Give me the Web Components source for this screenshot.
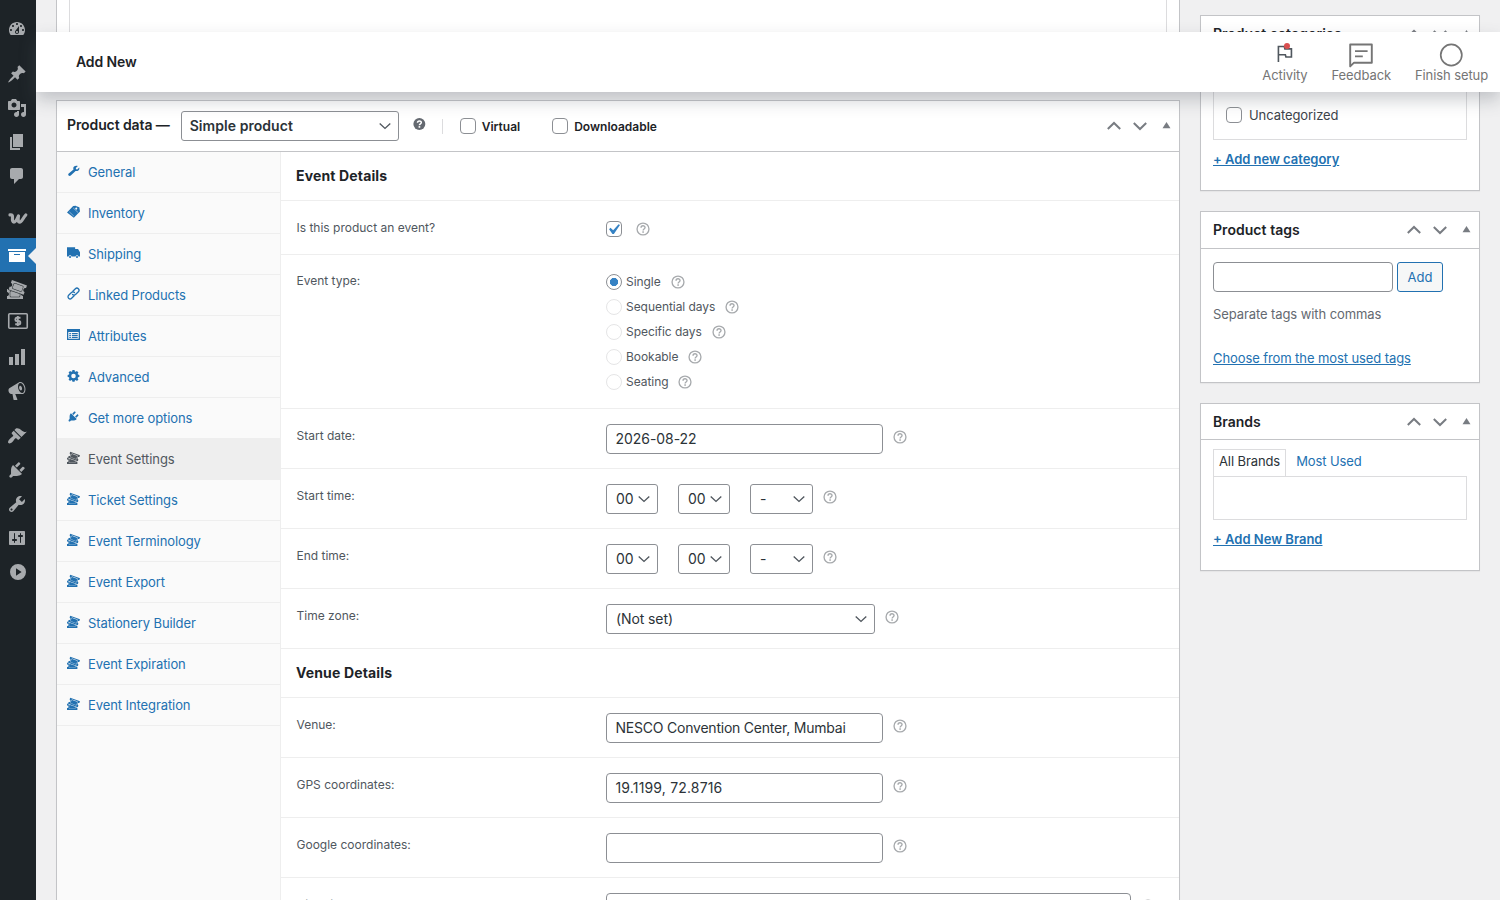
<!DOCTYPE html>
<html lang="en">
<head>
<meta charset="utf-8">
<title>Add New</title>
<style>
  body {
    margin: 0;
    height: 900px;
    overflow: hidden;
    position: relative;
    display: flex;
    background: #f0f0f1;
    color: #3c434a;
    font-family: Inter, "Liberation Sans", sans-serif;
    font-size: 13px;
  }
  #content {
    flex: 1;
    display: grid;
    grid-template-columns: 1124px 280px;
    column-gap: 20px;
    padding-left: 20px;
    align-items: start;
  }
  #side {
    padding-top: 15px;
    display: flex;
    flex-direction: column;
    gap: 20px;
  }
  .divider { width: 1px; height: 15px; background: #dcdcde; margin: 0 17px 0 16px; }
  .typeSelect { margin-left: 11px; }
</style>
</head>
<body>
<admin-menu></admin-menu>
<div id="content">
  <div>
    <editor-end></editor-end>
    <post-box class="productData" style="--head: 51px; --padLeft: 10px; height: 800px; border-bottom: 0">
      <span slot="title" style="letter-spacing: -0.1px; padding-bottom: 3px">Product data —</span>
      <wp-select slot="extra" class="typeSelect" style="width: 218px; --weight: 600; --pad: 8px; letter-spacing: 0.05px">Simple product</wp-select>
      <wp-icon slot="extra" name="helpFull" size="14" style="color: #646970; margin: -4px 0 0 13px"></wp-icon>
      <div slot="extra" class="divider"></div>
      <wp-check slot="extra" bold>Virtual</wp-check>
      <wp-check slot="extra" bold style="margin-left: 32px">Downloadable</wp-check>
      <product-panel></product-panel>
    </post-box>
  </div>
  <div id="side">
    <post-box style="height: 176px">
      <span slot="title">Product categories</span>
      <category-list></category-list>
    </post-box>
    <post-box style="height: 172px; --head: 37px">
      <span slot="title" style="padding-bottom: 2px; letter-spacing: 0.05px">Product tags</span>
      <tag-form></tag-form>
    </post-box>
    <post-box style="height: 168px">
      <span slot="title">Brands</span>
      <brand-list></brand-list>
    </post-box>
  </div>
</div>
<page-header>
  Add New
  <header-action slot="actions" icon="flag" dot>Activity</header-action>
  <header-action slot="actions" icon="feedback">Feedback</header-action>
  <header-action slot="actions" icon="ring">Finish setup</header-action>
</page-header>

<script>
const icons = {
  dashboard: '<path d="M3.76 16h12.48c1.1-1.37 1.76-3.11 1.76-5 0-4.42-3.58-8-8-8s-8 3.58-8 8c0 1.89.66 3.63 1.76 5zM10 4c.55 0 1 .45 1 1s-.45 1-1 1-1-.45-1-1 .45-1 1-1zM6 6c.55 0 1 .45 1 1s-.45 1-1 1-1-.45-1-1 .45-1 1-1zm8 0c.55 0 1 .45 1 1s-.45 1-1 1-1-.45-1-1 .45-1 1-1zm-5.37 5.55L12 7v6c0 1.1-.9 2-2 2s-2-.9-2-2c0-.57.24-1.08.63-1.45zM4 10c.55 0 1 .45 1 1s-.45 1-1 1-1-.45-1-1 .45-1 1-1zm12 0c.55 0 1 .45 1 1s-.45 1-1 1-1-.45-1-1 .45-1 1-1zm-5 3c0-.55-.45-1-1-1s-1 .45-1 1 .45 1 1 1 1-.45 1-1z"/>',
  pin: '<path d="M10.44 3.02l1.82-1.82 6.36 6.35-1.83 1.82c-1.05-.68-2.48-.57-3.41.36l-.75.75c-.92.93-1.04 2.35-.35 3.41l-1.83 1.82-2.41-2.41-2.8 2.79c-.42.42-3.38 2.71-3.8 2.29s1.86-3.39 2.28-3.81l2.79-2.79L4.1 9.36l1.83-1.82c1.05.69 2.48.57 3.4-.36l.75-.75c.93-.92 1.05-2.35.36-3.41z"/>',
  media: '<path d="M13 11V4c0-.55-.45-1-1-1h-1.67L9 1H5L3.67 3H2c-.55 0-1 .45-1 1v7c0 .55.45 1 1 1h10c.55 0 1-.45 1-1zM7 4.5c1.38 0 2.5 1.12 2.5 2.5S8.38 9.5 7 9.5 4.5 8.38 4.5 7 5.62 4.5 7 4.5zM14 6h5v10.5c0 1.38-1.12 2.5-2.5 2.5S14 17.88 14 16.5s1.12-2.5 2.5-2.5c.17 0 .34.02.5.05V9h-3V6zm-4 8.05V13h2v3.5c0 1.38-1.12 2.5-2.5 2.5S7 17.88 7 16.5 8.12 14 9.5 14c.17 0 .34.02.5.05z"/>',
  page: '<path d="M6 15V2h10v13H6zm-1 1h8v2H3V5h2v11z"/>',
  comments: '<path d="M5 2h9c1.1 0 2 .9 2 2v7c0 1.1-.9 2-2 2h-2l-5 5v-5H5c-1.1 0-2-.9-2-2V4c0-1.1.9-2 2-2z"/>',
  woo: '<path d="M2 6.1C4.400 5.700 4.600 7 4.500 9C4.300 11.500 4.600 13.400 5.900 13.400C7.600 13.400 9 10.500 10.500 7.100C9.800 10.500 10 13.400 11.700 13.400C13.700 13.400 14.800 9.500 17.800 6.200" fill="none" stroke="currentColor" stroke-width="3.200" stroke-linejoin="round" stroke-linecap="round" transform="translate(1 -2.2)"/>',
  archive: '<path d="M19 4v2H1V4h18zM2 7h16v10H2V7zm11 3V9H7v1h6z"/>',
  tickets: '<path d="M20 6.38L18.99 9.2v-.01c-.52-.19-1.03-.16-1.53.08s-.85.62-1.04 1.14-.16 1.03.07 1.53c.24.5.62.84 1.15 1.03v.01l-1.01 2.82-15.06-5.38.99-2.79c.52.19 1.03.16 1.53-.08.5-.23.84-.61 1.03-1.13s.16-1.03-.08-1.53c-.23-.49-.61-.83-1.13-1.02L4.93 1zm-4.97 5.69l1.37-3.76c.12-.31.1-.65-.04-.95s-.39-.53-.7-.65L8.14 3.98c-.64-.23-1.37.12-1.6.74L5.17 8.48c-.24.65.1 1.37.74 1.6l7.52 2.74c.14.05.28.08.43.08.52 0 1-.33 1.17-.83zM7.97 4.45l7.51 2.73c.19.07.34.21.43.39.08.18.09.38.02.57l-1.37 3.76c-.13.38-.58.59-.96.45L6.09 9.61c-.39-.14-.59-.57-.45-.96l1.37-3.76c.1-.29.39-.49.7-.49.09 0 .17.02.26.05zm6.82 12.14c.35.27.75.41 1.2.41H16v3H0v-2.96c.55 0 1.03-.2 1.41-.59.39-.38.59-.86.59-1.41s-.2-1.02-.59-1.41-.86-.59-1.41-.59V10h1.05l-.28.8 2.87 1.02c-.51.16-.89.62-.89 1.18v4c0 .69.56 1.25 1.25 1.25h8c.69 0 1.25-.56 1.25-1.25v-1.75l.83.3c.12.43.36.78.71 1.04zM3.25 17v-4c0-.41.34-.75.75-.75h.83l7.92 2.83V17c0 .41-.34.75-.75.75H4c-.41 0-.75-.34-.75-.75z"/>',
  payments: '<g transform="translate(.5 -.5)"><rect x="1.250" y="1.250" width="18.500" height="14.500" rx="1" fill="none" stroke="currentColor" stroke-width="1.600"/><path d="M13 5.300H9.200C7.400 5.300 7.400 8.500 9.200 8.500H11.300C13.300 8.500 13.300 11.800 11.300 11.800H7.700M10.300 3.500V13.600" fill="none" stroke="currentColor" stroke-width="1.900"/></g>',
  chart: '<path d="M18 18V2h-4v16h4zm-6 0V7H8v11h4zm-6 0v-8H2v8h4z"/>',
  megaphone: '<path d="M18.15 5.94c.46 1.62.38 3.22-.02 4.48-.42 1.28-1.26 2.18-2.3 2.48-.16.06-.26.06-.4.06-.06.02-.12.02-.18.02-.06.02-.14.02-.22.02h-6.8l2.22 5.5c.02.14-.06.26-.14.34-.08.1-.24.16-.34.16H6.95c-.1 0-.26-.06-.34-.16-.08-.08-.16-.2-.14-.34l-1-5.5H4.25l-.02-.02c-.5.06-1.08-.18-1.54-.62s-.88-1.08-1.06-1.88c-.24-.8-.2-1.56-.02-2.2.18-.62.58-1.08 1.06-1.3l.02-.02 9-5.4c.1-.06.18-.1.24-.16.06-.04.14-.08.24-.12.16-.08.28-.12.5-.18 1.04-.3 2.24.1 3.22.98s1.84 2.24 2.26 3.86zm-2.58 5.98h-.02c.4-.1.74-.34 1.04-.7.58-.7.86-1.76.86-3.04 0-.64-.1-1.3-.28-1.98-.34-1.36-1.02-2.5-1.78-3.24s-1.68-1.1-2.46-.88c-.82.22-1.4.96-1.7 2-.32 1.04-.28 2.36.06 3.72.38 1.36 1 2.5 1.8 3.24.78.74 1.62 1.1 2.48.88zm-2.54-7.08c.22-.04.42-.02.62.04.38.16.76.48 1.02 1s.42 1.2.42 1.78c0 .3-.04.56-.12.8-.18.48-.44.84-.86.94-.34.1-.8-.06-1.14-.4s-.64-.86-.78-1.5c-.18-.62-.12-1.24.02-1.72s.48-.84.82-.94z"/>',
  brush: '<path d="M14.48 11.06L7.41 3.99l1.5-1.5c.5-.56 2.3-.47 3.51.32 1.21.8 1.43 1.28 2.91 2.1 1.18.64 2.45 1.26 4.45.85zm-.71.71L6.7 4.7 4.93 6.47c-.39.39-.39 1.02 0 1.41l1.06 1.06c.39.39.39 1.03 0 1.42-.6.6-1.43 1.11-2.21 1.69-.35.26-.7.53-1.01.84C1.43 14.23.4 16.08 1.4 17.07c.99 1 2.84-.03 4.18-1.36.31-.31.58-.66.85-1.02.57-.78 1.08-1.61 1.69-2.21.39-.39 1.02-.39 1.41 0l1.06 1.06c.39.39 1.02.39 1.41 0z"/>',
  plug: '<path d="M13.11 4.36L9.87 7.6 8 5.73l3.24-3.24c.35-.34 1.05-.2 1.56.32.52.51.66 1.21.31 1.55zm-8 1.77l.91-1.12 9.01 9.01-1.19.84c-.71.71-2.63 1.16-3.82 1.16H6.14L4.9 17.26c-.59.59-1.54.59-2.12 0-.59-.58-.59-1.53 0-2.12l1.24-1.24v-3.88c0-1.13.4-3.19 1.09-3.89zm7.26 3.97l3.24-3.24c.34-.35 1.04-.21 1.55.31.52.51.66 1.21.31 1.55l-3.24 3.25z"/>',
  tools: '<path d="M16.68 9.77c-1.34 1.34-3.3 1.67-4.95.99l-5.41 6.52c-.99.99-2.59.99-3.58 0s-.99-2.59 0-3.57l6.52-5.42c-.68-1.65-.35-3.61.99-4.95 1.28-1.28 3.12-1.62 4.72-1.06l-2.89 2.89 2.82 2.82 2.86-2.87c.53 1.58.18 3.39-1.08 4.65zM3.81 16.21c.4.39 1.04.39 1.43 0 .4-.4.4-1.04 0-1.43-.39-.4-1.03-.4-1.43 0-.39.39-.39 1.03 0 1.43z"/>',
  settings: '<path d="M18 16V4c0-.55-.45-1-1-1H3c-.55 0-1 .45-1 1v12c0 .55.45 1 1 1h14c.55 0 1-.45 1-1zM8 11h1c.55 0 1 .45 1 1s-.45 1-1 1H8v1.5c0 .28-.22.5-.5.5s-.5-.22-.5-.5V13H6c-.55 0-1-.45-1-1s.45-1 1-1h1V5.5c0-.28.22-.5.5-.5s.5.22.5.5V11zm5-2h-1c-.55 0-1-.45-1-1s.45-1 1-1h1V5.500c0-.28.22-.5.5-.5s.5.22.5.5V7h1c.55 0 1 .45 1 1s-.45 1-1 1h-1v5.500c0 .28-.22.5-.5.5s-.5-.22-.5-.5V9z"/>',
  play: '<path fill-rule="evenodd" d="M11 2a8 8 0 1 0 0 16 8 8 0 0 0 0-16zM9 6.200L14.600 10 9 13.800z"/>',
  wrench: '<path d="M16.700 3.200L13.500 6.300l.5 1.700 1.700.5L18.800 5.300c.6 2-.1 3.800-1.400 4.800-1.300.9-2.800 1.100-4.200.5L5.800 17.800c-1 1-2.400 1-3.300 0-.9-1-.8-2.400.1-3.300L10 8.300c-.7-1.600-.3-3.300.9-4.400 1.500-1.400 3.800-1.600 5.800-.7z"/>',
  tag: '<path fill-rule="evenodd" d="M0 11.500L9.500 1.500 13.500 1 14.500 2 19 3.500 20 10 10.500 19.500zM14.200 3.800a1.500 1.500 0 1 0 .1 0z"/><path d="M3.500 10.500L10.500 17M9.500 4.500L17 11.500" stroke="#fafafa" stroke-width=".7"/>',
  truck: '<path d="M0 2h12.500v2.500h4.500l3 5V16h-2.300a2.400 2.400 0 0 0-4.600 0H7a2.400 2.400 0 0 0-4.600 0H0z"/><circle cx="4.700" cy="17" r="1.600"/><circle cx="15.400" cy="17" r="1.600"/>',
  link: '<g fill="none" stroke="currentColor" stroke-width="2" stroke-linecap="round"><path d="M9 6.600l3.900-4a3.200 3.200 0 0 1 4.600 4.600l-4.400 4.400a3.200 3.200 0 0 1-4.600 0"/><path d="M11 13.400l-3.900 4a3.200 3.200 0 0 1-4.600-4.600l4.400-4.400a3.200 3.200 0 0 1 4.600 0"/></g>',
  list: '<path fill-rule="evenodd" d="M0 1.500h20v17H0zM2 6v10.500h16V6zM3.500 7.500h2.500v2H3.500zm4 0h9v2h-9zM3.500 10.700h2.500v1.600H3.500zm4 0h9v1.600h-9zM3.500 13.500h2.500v2H3.500zm4 0h9v2h-9z"/>',
  gear: '<path fill-rule="evenodd" d="M8.400 1.500h3.200l.5 2.200 1.300.6 1.900-1.200 2.300 2.300-1.200 1.900.5 1.300 2.100.5v3.200l-2.100.5-.5 1.300 1.200 1.900-2.300 2.300-1.900-1.200-1.300.6-.5 2.100H8.400l-.5-2.100-1.300-.6-1.900 1.200L2.400 16l1.200-1.900-.5-1.300-2.100-.5V9.100l2.100-.5.5-1.300L2.400 5.400l2.300-2.300 1.900 1.200 1.300-.6zM10 7.200a3.500 3.500 0 1 0 0 7 3.500 3.500 0 0 0 0-7z"/>',
  help: '<circle cx="10" cy="10" r="8.500" fill="none" stroke="currentColor" stroke-width="1.900"/><path d="M7.200 8.200c0-3.700 5.700-3.500 5.700-.3 0 2.200-2.700 2.100-2.700 4.200" fill="none" stroke="currentColor" stroke-width="2"/><rect x="9" y="13.300" width="2.300" height="2.100"/>',
  helpFull: '<circle cx="10.500" cy="10" r="8.500"/><path d="M7.900 8.200c0-3.500 5.400-3.300 5.400-.4 0 2.200-2.700 2-2.700 4.100" fill="none" stroke="#fff" stroke-width="2.200"/><rect x="9.400" y="13" width="2.400" height="2.300" fill="#fff"/>',
  down: '<path d="M3.400 6.800l6.600 6.200 6.600-6.200" fill="none" stroke="currentColor" stroke-width="1.700"/>',
  check: '<path d="M14.83 4.89l1.34.94-5.81 8.38H9.020L5.780 9.670l1.340-1.250 2.570 2.400z"/>',
  orderUp: '<path d="M3.800 13l6.200-6 6.200 6" fill="none" stroke="currentColor" stroke-width="2"/>',
  orderDown: '<path d="M3.800 7l6.200 6 6.200-6" fill="none" stroke="currentColor" stroke-width="2"/>',
  toggle: '<path d="M6.500 12.200L10.500 6l4 6.200z"/>',
  flag: '<path d="M3.600 19V2.700h6.200l.6 2.400h6.900v8.600h-5.800l-.6-2.400H3.600" fill="none" stroke="currentColor" stroke-width="1.700"/>',
  feedback: '<path d="M1 19.500V1.200h18v15.200H4.200z" fill="none" stroke="currentColor" stroke-width="1.600" stroke-linejoin="round"/><path d="M5 6.800h10.500M5 11.200h6.500" stroke="currentColor" stroke-width="1.500"/>',
  ring: '<circle cx="9.400" cy="10" r="8.800" fill="none" stroke="currentColor" stroke-width="1.400"/>'
}

/**
 * Attaches an open shadow root and fills it with the given markup.
 */
function render (element, markup) {
  const template = document.createElement('template')
  template.innerHTML = markup
  element.attachShadow({ mode: 'open' }).appendChild(template.content.cloneNode(true))
}

customElements.define('wp-icon',
  class extends HTMLElement {
    connectedCallback () {
      if (this.shadowRoot) return
      const size = this.getAttribute('size') || 20
      render(this, `
        <style>
          :host { display: block; flex: none; width: ${size}px; height: ${size}px; }
          svg { display: block; fill: currentColor; overflow: visible; }
        </style>
        <svg width="${size}" height="${size}" viewBox="0 0 20 20">${icons[this.getAttribute('name')]}</svg>
      `)
    }
  }
)

customElements.define('menu-item',
  class extends HTMLElement {
    connectedCallback () {
      render(this, `
        <style>
          :host {
            display: flex;
            align-items: center;
            justify-content: center;
            box-sizing: border-box;
            height: 34px;
            padding-right: 2px;
            color: #a7aaad;
            position: relative;
          }
          :host([active]) { background: #2271b1; color: #fff; }
          :host([active])::after {
            content: "";
            position: absolute;
            right: 0;
            top: 10px;
            border: solid transparent;
            border-width: 8px 8px 8px 0;
            border-right-color: #f0f0f1;
          }
          :host([split]) { margin-top: 11px; }
        </style>
        <wp-icon name="${this.getAttribute('icon')}"></wp-icon>
      `)
    }
  }
)

customElements.define('admin-menu',
  class extends HTMLElement {
    constructor () {
      super()
      render(this, `
        <style>
          :host { display: block; width: 36px; padding-top: 12px; box-sizing: border-box; height: 900px; background: #1d2327; }
        </style>
        <menu-item icon="dashboard"></menu-item>
        <menu-item icon="pin" split></menu-item>
        <menu-item icon="media"></menu-item>
        <menu-item icon="page"></menu-item>
        <menu-item icon="comments"></menu-item>
        <menu-item icon="woo" split></menu-item>
        <menu-item icon="archive" active></menu-item>
        <menu-item icon="tickets"></menu-item>
        <menu-item icon="payments"></menu-item>
        <menu-item icon="chart"></menu-item>
        <menu-item icon="megaphone"></menu-item>
        <menu-item icon="brush" split></menu-item>
        <menu-item icon="plug"></menu-item>
        <menu-item icon="tools"></menu-item>
        <menu-item icon="settings"></menu-item>
        <menu-item icon="play"></menu-item>
      `)
    }
  }
)

customElements.define('editor-end',
  class extends HTMLElement {
    constructor () {
      super()
      render(this, `
        <style>
          :host {
            display: block;
            box-sizing: border-box;
            height: 80px;
            margin-bottom: 20px;
            padding: 0 12px 12px;
            background: #fff;
            border: solid #c3c4c7;
            border-width: 0 1px 1px;
          }
          div { height: 66px; border: solid #dcdcde; border-width: 0 1px 1px; }
        </style>
        <div></div>
      `)
    }
  }
)

customElements.define('page-header',
  class extends HTMLElement {
    constructor () {
      super()
      render(this, `
        <style>
          :host {
            position: absolute;
            top: 32px;
            left: 36px;
            right: 0;
            height: 60px;
            box-sizing: border-box;
            padding: 0 12px 0 40px;
            display: flex;
            align-items: center;
            background: #fff;
            color: #1d2327;
            font-size: 14px;
            font-weight: 600;
            box-shadow: 0 8px 16px 0 rgba(85, 93, 102, 0.3);
          }
          #title { flex: 1; padding-bottom: 2px; letter-spacing: -0.1px; }
          #actions { display: flex; gap: 24px; }
        </style>
        <div id="title"><slot></slot></div>
        <div id="actions"><slot name="actions"></slot></div>
      `)
    }
  }
)

customElements.define('header-action',
  class extends HTMLElement {
    connectedCallback () {
      render(this, `
        <style>
          :host {
            display: flex;
            flex-direction: column;
            align-items: center;
            padding-top: 1px;
            color: #757575;
            font-size: 13px;
            font-weight: 400;
            line-height: 16px;
            letter-spacing: -0.1px;
            white-space: nowrap;
          }
          #icon { position: relative; height: 24px; display: flex; align-items: center; }
          :host([dot]) #icon { color: #50575e; }
          :host([dot]) #icon::after {
            content: "";
            position: absolute;
            width: 6px;
            height: 6px;
            border-radius: 50%;
            background: #d94f4f;
            top: 0;
            left: 9px;
          }
          wp-icon[name="flag"] { margin-top: -2px; }
        </style>
        <div id="icon"><wp-icon name="${this.getAttribute('icon')}" size="${this.hasAttribute('dot') ? 19 : 24}"></wp-icon></div>
        <slot></slot>
      `)
    }
  }
)

customElements.define('post-box',
  class extends HTMLElement {
    constructor () {
      super()
      render(this, `
        <style>
          :host {
            display: flex;
            flex-direction: column;
            box-sizing: border-box;
            background: #fff;
            border: 1px solid #c3c4c7;
            box-shadow: 0 1px 1px rgba(0, 0, 0, 0.04);
          }
          #head {
            display: flex;
            align-items: center;
            flex: none;
            box-sizing: border-box;
            height: var(--head, 36px);
            padding: 0 3px 0 var(--padLeft, 12px);
            border-bottom: 1px solid #c3c4c7;
            color: #1d2327;
            font-size: 14px;
            font-weight: 600;
            white-space: nowrap;
          }
          #space { flex: 1; }
          #order { display: flex; gap: 6px; color: #787c82; }
          #body { flex: 1; min-height: 0; }
        </style>
        <div id="head">
          <slot name="title"></slot>
          <slot name="extra"></slot>
          <div id="space"></div>
          <div id="order">
            <wp-icon name="orderUp"></wp-icon>
            <wp-icon name="orderDown"></wp-icon>
            <wp-icon name="toggle"></wp-icon>
          </div>
        </div>
        <div id="body"><slot></slot></div>
      `)
    }
  }
)

customElements.define('wp-select',
  class extends HTMLElement {
    constructor () {
      super()
      render(this, `
        <style>
          :host {
            display: flex;
            align-items: center;
            justify-content: space-between;
            box-sizing: border-box;
            height: 30px;
            padding: 0 5px 0 var(--pad, 9px);
            background: #fff;
            border: 1px solid #8c8f94;
            border-radius: 3px;
            color: #2c3338;
            font-size: 14px;
            font-weight: var(--weight, 400);
            white-space: nowrap;
          }
          span { padding-bottom: 2px; }
          wp-icon { color: #50575e; }
        </style>
        <span><slot></slot></span>
        <wp-icon name="down" size="16"></wp-icon>
      `)
    }
  }
)

customElements.define('wp-input',
  class extends HTMLElement {
    constructor () {
      super()
      render(this, `
        <style>
          :host {
            display: flex;
            align-items: center;
            box-sizing: border-box;
            width: 277px;
            height: 30px;
            padding: 0 9px 2px 8.5px;
            background: #fff;
            border: 1px solid #8c8f94;
            border-radius: 4px;
            color: #2c3338;
            font-size: 14px;
          }
        </style>
        <slot></slot>
      `)
    }
  }
)

customElements.define('wp-check',
  class extends HTMLElement {
    connectedCallback () {
      render(this, `
        <style>
          :host { display: flex; align-items: center; gap: 7px; }
          :host([bold]) { gap: 6px; font-size: 12px; font-weight: 600; color: #1d2327; }
          #box {
            box-sizing: border-box;
            width: 16px;
            height: 16px;
            border: 1px solid #8c8f94;
            border-radius: 4px;
            background: #fff;
            color: #3582c4;
          }
          wp-icon { margin: -3px 0 0 -4px; }
        </style>
        <div id="box">${this.hasAttribute('checked') ? '<wp-icon name="check" size="21"></wp-icon>' : ''}</div>
        <slot></slot>
      `)
    }
  }
)

customElements.define('wp-radio',
  class extends HTMLElement {
    constructor () {
      super()
      render(this, `
        <style>
          :host { display: flex; align-items: center; height: 25px; font-size: 12px; letter-spacing: -0.05px; }
          #dot {
            box-sizing: border-box;
            width: 16px;
            height: 16px;
            margin-right: 4px;
            border: 1px solid #e5e5e6;
            border-radius: 50%;
          }
          :host([checked]) #dot { border-color: #8c8f94; background: radial-gradient(circle, #3582c4 3.8px, #fff 4.4px); }
          wp-icon { margin-left: 10px; color: #a7aaad; }
        </style>
        <div id="dot"></div>
        <slot></slot>
        <wp-icon name="help" size="14"></wp-icon>
      `)
    }
  }
)

customElements.define('data-tab',
  class extends HTMLElement {
    connectedCallback () {
      render(this, `
        <style>
          :host {
            display: flex;
            align-items: center;
            gap: 8px;
            box-sizing: border-box;
            height: 41px;
            padding-left: 10px;
            border-bottom: 1px solid #eee;
            color: #2271b1;
            letter-spacing: -0.09px;
          }
          :host([active]) { background: #eee; color: #50575e; }
          wp-icon { margin-top: -4px; }
        </style>
        <wp-icon name="${this.getAttribute('icon') || 'tickets'}" size="13"></wp-icon>
        <slot></slot>
      `)
    }
  }
)

customElements.define('option-row',
  class extends HTMLElement {
    connectedCallback () {
      render(this, `
        <style>
          :host {
            display: flex;
            box-sizing: border-box;
            height: 60px;
            padding: 15px 0 0 15px;
            border-bottom: 1px solid #eee;
            font-size: 12px;
            color: #50575e;
          }
          #label { box-sizing: border-box; width: 310px; padding-left: 0.5px; line-height: 24px; }
          #fields { display: flex; gap: 20px; }
          #help { margin: 6px 0 0 10px; color: #a7aaad; }
        </style>
        <div id="label">${this.getAttribute('label')}</div>
        <div id="fields"><slot></slot></div>
        ${this.hasAttribute('nohelp') ? '' : '<wp-icon id="help" name="help" size="14"></wp-icon>'}
      `)
    }
  }
)

customElements.define('product-panel',
  class extends HTMLElement {
    constructor () {
      super()
      render(this, `
        <style>
          :host { display: grid; grid-template-columns: 223px 1fr; height: 100%; }
          #tabs { background: #fafafa; }
          #options { border-left: 1px solid #eee; overflow: hidden; }
          h2 {
            margin: 0;
            box-sizing: border-box;
            height: 49px;
            padding-left: 15px;
            line-height: 48px;
            border-bottom: 1px solid #eee;
            font-size: 14px;
            font-weight: 700;
            letter-spacing: 0.15px;
            color: #1d2327;
          }
          .hour { width: 52px; }
          .period { width: 63px; }
        </style>
        <div id="tabs">
          <data-tab icon="wrench">General</data-tab>
          <data-tab icon="tag">Inventory</data-tab>
          <data-tab icon="truck">Shipping</data-tab>
          <data-tab icon="link">Linked Products</data-tab>
          <data-tab icon="list">Attributes</data-tab>
          <data-tab icon="gear">Advanced</data-tab>
          <data-tab icon="plug">Get more options</data-tab>
          <data-tab active>Event Settings</data-tab>
          <data-tab>Ticket Settings</data-tab>
          <data-tab>Event Terminology</data-tab>
          <data-tab>Event Export</data-tab>
          <data-tab>Stationery Builder</data-tab>
          <data-tab>Event Expiration</data-tab>
          <data-tab>Event Integration</data-tab>
        </div>
        <div id="options">
          <h2>Event Details</h2>
          <option-row label="Is this product an event?" style="height: 54px">
            <wp-check checked style="height: 26px; margin-right: 4px"></wp-check>
          </option-row>
          <option-row label="Event type:" nohelp style="height: 154px; padding-top: 14px">
            <div>
              <wp-radio checked>Single</wp-radio>
              <wp-radio>Sequential days</wp-radio>
              <wp-radio>Specific days</wp-radio>
              <wp-radio>Bookable</wp-radio>
              <wp-radio>Seating</wp-radio>
            </div>
          </option-row>
          <option-row label="Start date:"><wp-input style="letter-spacing: -0.05px">2026-08-22</wp-input></option-row>
          <option-row label="Start time:">
            <wp-select class="hour">00</wp-select>
            <wp-select class="hour">00</wp-select>
            <wp-select class="period">-</wp-select>
          </option-row>
          <option-row label="End time:">
            <wp-select class="hour">00</wp-select>
            <wp-select class="hour">00</wp-select>
            <wp-select class="period">-</wp-select>
          </option-row>
          <option-row label="Time zone:"><wp-select style="width: 269px; letter-spacing: -0.1px">(Not set)</wp-select></option-row>
          <h2>Venue Details</h2>
          <option-row label="Venue:"><wp-input style="letter-spacing: -0.22px">NESCO Convention Center, Mumbai</wp-input></option-row>
          <option-row label="GPS coordinates:"><wp-input style="letter-spacing: 0.16px">19.1199, 72.8716</wp-input></option-row>
          <option-row label="Google coordinates:"><wp-input></wp-input></option-row>
          <option-row label="Directions:"><wp-input style="width: 525px; height: 52px"></wp-input></option-row>
        </div>
      `)
    }
  }
)

customElements.define('category-list',
  class extends HTMLElement {
    constructor () {
      super()
      render(this, `
        <style>
          :host { display: block; padding: 12px 12px 0; }
          #list {
            height: 76px;
            box-sizing: border-box;
            padding: 42px 12px 0;
            border: 1px solid #dcdcde;
            letter-spacing: -0.08px;
          }
          a { display: block; margin-top: 10px; line-height: 18px; font-weight: 600; letter-spacing: -0.03px; color: #2271b1; text-decoration: underline; }
        </style>
        <div id="list"><wp-check>Uncategorized</wp-check></div>
        <a>+ Add new category</a>
      `)
    }
  }
)

customElements.define('tag-form',
  class extends HTMLElement {
    constructor () {
      super()
      render(this, `
        <style>
          :host { display: block; padding: 13px 12px 0; letter-spacing: -0.09px; }
          #row { display: flex; gap: 4px; }
          wp-input { width: 180px; }
          button {
            width: 46px;
            height: 30px;
            padding: 0;
            border: 1px solid #2271b1;
            border-radius: 3px;
            background: #f6f7f7;
            color: #2271b1;
            font: inherit;
          }
          p { margin: 13px 0 26px; line-height: 18px; color: #646970; }
          a { color: #2271b1; text-decoration: underline; line-height: 18px; }
        </style>
        <div id="row"><wp-input></wp-input><button>Add</button></div>
        <p>Separate tags with commas</p>
        <a>Choose from the most used tags</a>
      `)
    }
  }
)

customElements.define('brand-list',
  class extends HTMLElement {
    constructor () {
      super()
      render(this, `
        <style>
          :host { display: block; padding: 9px 12px 0; }
          #tabs { display: flex; line-height: 23px; letter-spacing: -0.1px; color: #2271b1; }
          #tabs span { height: 26px; padding: 0 5px; border: 1px solid transparent; border-bottom: 0; }
          #tabs .active {
            margin: 0 4px -1px 0;
            background: #fff;
            border-color: #dcdcde;
            color: #2c3338;
            position: relative;
          }
          #list { height: 42px; border: 1px solid #dcdcde; }
          a { display: block; margin-top: 10px; line-height: 18px; font-weight: 600; color: #2271b1; text-decoration: underline; }
        </style>
        <div id="tabs"><span class="active">All Brands</span><span>Most Used</span></div>
        <div id="list"></div>
        <a>+ Add New Brand</a>
      `)
    }
  }
)
</script>
</body>
</html>
